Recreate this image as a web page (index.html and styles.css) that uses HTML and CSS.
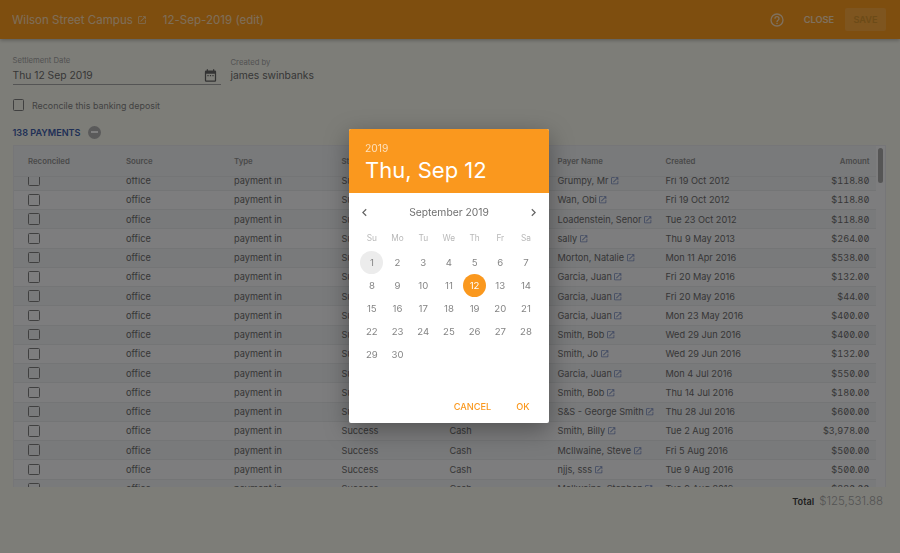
FILE: index.html
```html
<!DOCTYPE html>
<html lang="en">
<head>
    <meta charset="UTF-8">
    <meta name="viewport" content="width=device-width, initial-scale=1.0">
    <title>Settlement</title>
    <link rel="stylesheet" href="styles.css">
</head>
<body>
    <svg class="sprite" width="0" height="0">
        <symbol id="open" viewBox="0 0 24 24"><path d="M19 19H5V5h7V3H5a2 2 0 0 0-2 2v14a2 2 0 0 0 2 2h14a2 2 0 0 0 2-2v-7h-2v7zM14 3v2h3.59l-9.83 9.83 1.41 1.41L19 6.41V10h2V3h-7z"/></symbol>
    </svg>

    <header class="topbar">
        <div class="topbar-title">Wilson Street Campus<svg class="icon-open"><use href="#open"/></svg></div>
        <div class="topbar-date">12-Sep-2019 (edit)</div>
        <svg class="icon-help" viewBox="0 0 24 24"><path d="M11 18h2v-2h-2v2zm1-16a10 10 0 1 0 0 20 10 10 0 0 0 0-20zm0 18a8 8 0 1 1 0-16 8 8 0 0 1 0 16zm0-14a4 4 0 0 0-4 4h2a2 2 0 1 1 4 0c0 2-3 1.75-3 5h2c0-2.25 3-2.5 3-5a4 4 0 0 0-4-4z"/></svg>
        <button class="btn-close">CLOSE</button>
        <button class="btn-save">SAVE</button>
    </header>

    <main class="content">
        <div class="form-row">
            <div class="field-date">
                <label>Settlement Date</label>
                <div class="field-date-value">
                    <span>Thu 12 Sep 2019</span>
                    <svg class="icon-cal" viewBox="0 0 24 24"><path d="M9 11H7v2h2v-2zm4 0h-2v2h2v-2zm4 0h-2v2h2v-2zm2-7h-1V2h-2v2H8V2H6v2H5a2 2 0 0 0-2 2v14a2 2 0 0 0 2 2h14a2 2 0 0 0 2-2V6a2 2 0 0 0-2-2zm0 16H5V9h14v11z"/></svg>
                </div>
            </div>
            <div class="field-created">
                <label>Created by</label>
                <div>james swinbanks</div>
            </div>
        </div>

        <div class="reconcile"><span class="checkbox"></span>Reconcile this banking deposit</div>

        <div class="payments-title">
            138 PAYMENTS
            <span class="collapse"><i></i></span>
        </div>

        <div class="table-wrap">
            <div class="row table-head">
                <div>Reconciled</div><div>Source</div><div>Type</div><div>Status</div><div>Method</div><div>Payer Name</div><div>Created</div><div class="amount">Amount</div>
            </div>
            <div class="table-body">
                <div class="row"><div><span class="checkbox"></span></div><div>office</div><div>payment in</div><div>Success</div><div>Cash</div><div>Grumpy, Mr<svg class="icon-link"><use href="#open"/></svg></div><div>Fri 19 Oct 2012</div><div class="amount">$118.80</div></div>
                <div class="row"><div><span class="checkbox"></span></div><div>office</div><div>payment in</div><div>Success</div><div>Cash</div><div>Wan, Obi<svg class="icon-link"><use href="#open"/></svg></div><div>Fri 19 Oct 2012</div><div class="amount">$118.80</div></div>
                <div class="row"><div><span class="checkbox"></span></div><div>office</div><div>payment in</div><div>Success</div><div>Cash</div><div>Loadenstein, Senor<svg class="icon-link"><use href="#open"/></svg></div><div>Tue 23 Oct 2012</div><div class="amount">$118.80</div></div>
                <div class="row"><div><span class="checkbox"></span></div><div>office</div><div>payment in</div><div>Success</div><div>Cash</div><div>sally<svg class="icon-link"><use href="#open"/></svg></div><div>Thu 9 May 2013</div><div class="amount">$264.00</div></div>
                <div class="row"><div><span class="checkbox"></span></div><div>office</div><div>payment in</div><div>Success</div><div>Cash</div><div>Morton, Natalie<svg class="icon-link"><use href="#open"/></svg></div><div>Mon 11 Apr 2016</div><div class="amount">$538.00</div></div>
                <div class="row"><div><span class="checkbox"></span></div><div>office</div><div>payment in</div><div>Success</div><div>Cash</div><div>Garcia, Juan<svg class="icon-link"><use href="#open"/></svg></div><div>Fri 20 May 2016</div><div class="amount">$132.00</div></div>
                <div class="row"><div><span class="checkbox"></span></div><div>office</div><div>payment in</div><div>Success</div><div>Cash</div><div>Garcia, Juan<svg class="icon-link"><use href="#open"/></svg></div><div>Fri 20 May 2016</div><div class="amount">$44.00</div></div>
                <div class="row"><div><span class="checkbox"></span></div><div>office</div><div>payment in</div><div>Success</div><div>Cash</div><div>Garcia, Juan<svg class="icon-link"><use href="#open"/></svg></div><div>Mon 23 May 2016</div><div class="amount">$400.00</div></div>
                <div class="row"><div><span class="checkbox"></span></div><div>office</div><div>payment in</div><div>Success</div><div>Cash</div><div>Smith, Bob<svg class="icon-link"><use href="#open"/></svg></div><div>Wed 29 Jun 2016</div><div class="amount">$400.00</div></div>
                <div class="row"><div><span class="checkbox"></span></div><div>office</div><div>payment in</div><div>Success</div><div>Cash</div><div>Smith, Jo<svg class="icon-link"><use href="#open"/></svg></div><div>Wed 29 Jun 2016</div><div class="amount">$132.00</div></div>
                <div class="row"><div><span class="checkbox"></span></div><div>office</div><div>payment in</div><div>Success</div><div>Cash</div><div>Garcia, Juan<svg class="icon-link"><use href="#open"/></svg></div><div>Mon 4 Jul 2016</div><div class="amount">$550.00</div></div>
                <div class="row"><div><span class="checkbox"></span></div><div>office</div><div>payment in</div><div>Success</div><div>Cash</div><div>Smith, Bob<svg class="icon-link"><use href="#open"/></svg></div><div>Thu 14 Jul 2016</div><div class="amount">$180.00</div></div>
                <div class="row"><div><span class="checkbox"></span></div><div>office</div><div>payment in</div><div>Success</div><div>Cash</div><div>S&amp;S - George Smith<svg class="icon-link"><use href="#open"/></svg></div><div>Thu 28 Jul 2016</div><div class="amount">$600.00</div></div>
                <div class="row"><div><span class="checkbox"></span></div><div>office</div><div>payment in</div><div>Success</div><div>Cash</div><div>Smith, Billy<svg class="icon-link"><use href="#open"/></svg></div><div>Tue 2 Aug 2016</div><div class="amount">$3,978.00</div></div>
                <div class="row"><div><span class="checkbox"></span></div><div>office</div><div>payment in</div><div>Success</div><div>Cash</div><div>McIlwaine, Steve<svg class="icon-link"><use href="#open"/></svg></div><div>Fri 5 Aug 2016</div><div class="amount">$500.00</div></div>
                <div class="row"><div><span class="checkbox"></span></div><div>office</div><div>payment in</div><div>Success</div><div>Cash</div><div>njjs, sss<svg class="icon-link"><use href="#open"/></svg></div><div>Tue 9 Aug 2016</div><div class="amount">$500.00</div></div>
                <div class="row"><div><span class="checkbox"></span></div><div>office</div><div>payment in</div><div>Success</div><div>Cash</div><div>McIlwaine, Stephen<svg class="icon-link"><use href="#open"/></svg></div><div>Tue 9 Aug 2016</div><div class="amount">$880.00</div></div>
            </div>
            <div class="scroll-thumb"></div>
        </div>

        <div class="total"><b>Total</b><span>$125,531.88</span></div>
    </main>

    <div class="backdrop"></div>

    <div class="picker">
        <div class="picker-head">
            <div class="picker-year">2019</div>
            <div class="picker-date">Thu, Sep 12</div>
        </div>
        <div class="picker-nav">
            <svg viewBox="0 0 24 24"><path d="M15.41 7.41 14 6l-6 6 6 6 1.41-1.41L10.83 12z"/></svg>
            <span>September 2019</span>
            <svg viewBox="0 0 24 24"><path d="M8.59 16.59 10 18l6-6-6-6-1.41 1.41L13.17 12z"/></svg>
        </div>
        <div class="picker-week">
            <span>Su</span><span>Mo</span><span>Tu</span><span>We</span><span>Th</span><span>Fr</span><span>Sa</span>
        </div>
        <div class="picker-days">
            <span class="today">1</span><span>2</span><span>3</span><span>4</span><span>5</span><span>6</span><span>7</span>
            <span>8</span><span>9</span><span>10</span><span>11</span><span class="selected">12</span><span>13</span><span>14</span>
            <span>15</span><span>16</span><span>17</span><span>18</span><span>19</span><span>20</span><span>21</span>
            <span>22</span><span>23</span><span>24</span><span>25</span><span>26</span><span>27</span><span>28</span>
            <span>29</span><span>30</span>
        </div>
        <div class="picker-actions">
            <button>CANCEL</button>
            <button>OK</button>
        </div>
    </div>
</body>
</html>
```

FILE: styles.css
```css
* {
    box-sizing: border-box;
}

body {
    margin: 0;
    width: 900px;
    height: 553px;
    overflow: hidden;
    font-family: Inter, "Liberation Sans", sans-serif;
    font-size: 9.2px;
    color: #6e6e6e;
    background-color: #fbfbf1;
}

.sprite {
    display: block;
}

button {
    font-family: inherit;
    border: none;
    background: none;
    padding: 0;
}

/* top bar */
.topbar {
    height: 39px;
    padding: 0 14px 0 12px;
    display: flex;
    align-items: center;
    background-color: #fc9c1f;
    color: #fff;
    box-shadow: 0 1px 4px rgba(0, 0, 0, 0.3);
}

.topbar-title,
.topbar-date {
    font-size: 11.5px;
    letter-spacing: 0.02px;
    opacity: 0.65;
}

.topbar-title {
    display: flex;
    align-items: center;
}

.icon-open {
    width: 10px;
    height: 10px;
    margin-left: 4px;
    fill: #fff;
}

.topbar-date {
    margin-left: 16px;
}

.icon-help {
    width: 16px;
    height: 16px;
    margin-left: auto;
    fill: #fff;
    opacity: 0.7;
}

.btn-close {
    margin-left: 19px;
    font-size: 9.2px;
    font-weight: 600;
    color: #fff;
    opacity: 0.7;
}

.btn-save {
    width: 41px;
    height: 23px;
    margin-left: 11px;
    border-radius: 2px;
    font-size: 9.2px;
    font-weight: 600;
    color: #d9962f;
    background-color: rgba(255, 255, 255, 0.14);
}

/* form */
.content {
    padding: 0 15px 0 12.5px;
}

.form-row {
    display: flex;
    height: 47px;
    padding-top: 15px;
}

.field-date {
    width: 208px;
    border-bottom: 1px solid #a8a8a8;
    height: 31px;
}

.field-date label,
.field-created label {
    display: block;
    font-size: 7.7px;
    line-height: 11px;
    color: #a5a5a5;
}

.field-date label {
    padding-top: 1px;
}

.field-date-value {
    display: flex;
    align-items: center;
    justify-content: space-between;
    font-size: 10.3px;
    height: 18px;
}

.icon-cal {
    width: 15px;
    height: 15px;
    fill: #666;
    margin-right: 3px;
}

.field-created {
    margin-left: 10px;
    padding-top: 2px;
    font-size: 10.3px;
}

.field-created label {
    margin-top: 1px;
}

.field-created div {
    line-height: 15px;
}

.checkbox {
    display: block;
    width: 11.5px;
    height: 11.5px;
    border: 1.3px solid #808080;
    border-radius: 1.5px;
}

.reconcile {
    display: flex;
    align-items: center;
    gap: 8px;
    height: 18px;
    margin-top: 10px;
    font-size: 8.9px;
    color: #858585;
}

.payments-title {
    display: flex;
    align-items: center;
    gap: 7px;
    height: 14px;
    margin-top: 11px;
    font-size: 9.1px;
    font-weight: 600;
    color: #3f60ad;
}

.collapse {
    display: flex;
    align-items: center;
    justify-content: center;
    width: 13px;
    height: 13px;
    border-radius: 50%;
    background-color: #b4b4b4;
}

.collapse i {
    width: 7px;
    height: 1.4px;
    background-color: #fff;
}

/* table */
.table-wrap {
    position: relative;
    isolation: isolate;
    display: flex;
    flex-direction: column;
    width: 873px;
    height: 342px;
    margin-top: 6px;
    padding-right: 9px;
    border: 1px solid #ecedf0;
    border-bottom: none;
    background-color: #fbfbfd;
    overflow: hidden;
}

.row {
    display: grid;
    grid-template-columns: 98px 108px 107.5px 108px 108px 108px 1fr 60px;
    align-items: center;
    height: 19.25px;
    padding: 0 6px 0 14.5px;
    margin-top: 0;
    border-bottom: 1px solid #e9eaec;
    background-color: #fafafc;
}

.row:nth-child(odd) {
    background-color: #f3f4f7;
}

.table-head {
    flex: none;
    height: 31px;
    font-size: 7.8px;
    font-weight: 600;
    color: #949494;
    background-color: #fbfbfd;
    z-index: 1;
}

.table-body {
    margin-top: -5.5px;
}

.amount {
    text-align: right;
}

.table-body .amount {
    font-feature-settings: "tnum", "zero";
}

.icon-link {
    width: 9.5px;
    height: 9.5px;
    margin-left: 1.5px;
    fill: #7c90c4;
    vertical-align: -1.5px;
}

.scroll-thumb {
    position: absolute;
    top: 2px;
    right: 2px;
    width: 5px;
    height: 35px;
    border-radius: 3px;
    background-color: #aaa;
}

.total {
    display: flex;
    justify-content: flex-end;
    align-items: baseline;
    gap: 5px;
    margin-top: 7px;
    padding-right: 2px;
}

.total b {
    font-size: 9.2px;
    font-weight: 600;
    color: #404040;
}

.total span {
    font-size: 11.5px;
    font-weight: 300;
    color: #a8a8a8;
}

/* date picker */
.backdrop {
    position: fixed;
    inset: 0;
    background-color: rgba(0, 0, 0, 0.5);
}

.picker {
    position: absolute;
    left: 349px;
    top: 129px;
    width: 200px;
    height: 294px;
    border-radius: 2px;
    overflow: hidden;
    background-color: #fff;
    box-shadow: 0 7px 24px rgba(0, 0, 0, 0.35);
}

.picker-head {
    height: 64px;
    padding: 13px 16px 0;
    color: #fff;
    background-color: #fa981e;
}

.picker-year {
    font-size: 10.3px;
    line-height: 12px;
    opacity: 0.7;
}

.picker-date {
    font-size: 22px;
    line-height: 30px;
    margin-top: 1px;
}

.picker-nav {
    display: flex;
    align-items: center;
    justify-content: space-between;
    height: 16px;
    margin-top: 11px;
    padding: 0 8px;
    font-size: 10.3px;
    color: #707070;
}

.picker-nav svg {
    width: 15px;
    height: 15px;
    fill: #666;
}

.picker-week,
.picker-days {
    display: grid;
    grid-template-columns: repeat(7, 25.7px);
    padding-left: 10px;
    text-align: center;
}

.picker-week {
    margin-top: 12px;
    line-height: 12px;
    font-size: 8.3px;
    color: #b8b8b8;
}

.picker-days {
    grid-auto-rows: 23.1px;
    margin-top: 7px;
    font-size: 9.6px;
    color: #858585;
}

.picker-days span {
    display: flex;
    align-items: center;
    justify-content: center;
    width: 23px;
    height: 23px;
    margin: 0 auto;
    border-radius: 50%;
}

.picker-days .today {
    background-color: #ececec;
}

.picker-days .selected {
    color: #fff;
    background-color: #fa981e;
}

.picker-actions {
    position: absolute;
    right: 19.5px;
    bottom: 10px;
    display: flex;
    gap: 25px;
}

.picker-actions button {
    font-size: 9.2px;
    font-weight: 500;
    line-height: 12px;
    color: #fa981e;
}
```
